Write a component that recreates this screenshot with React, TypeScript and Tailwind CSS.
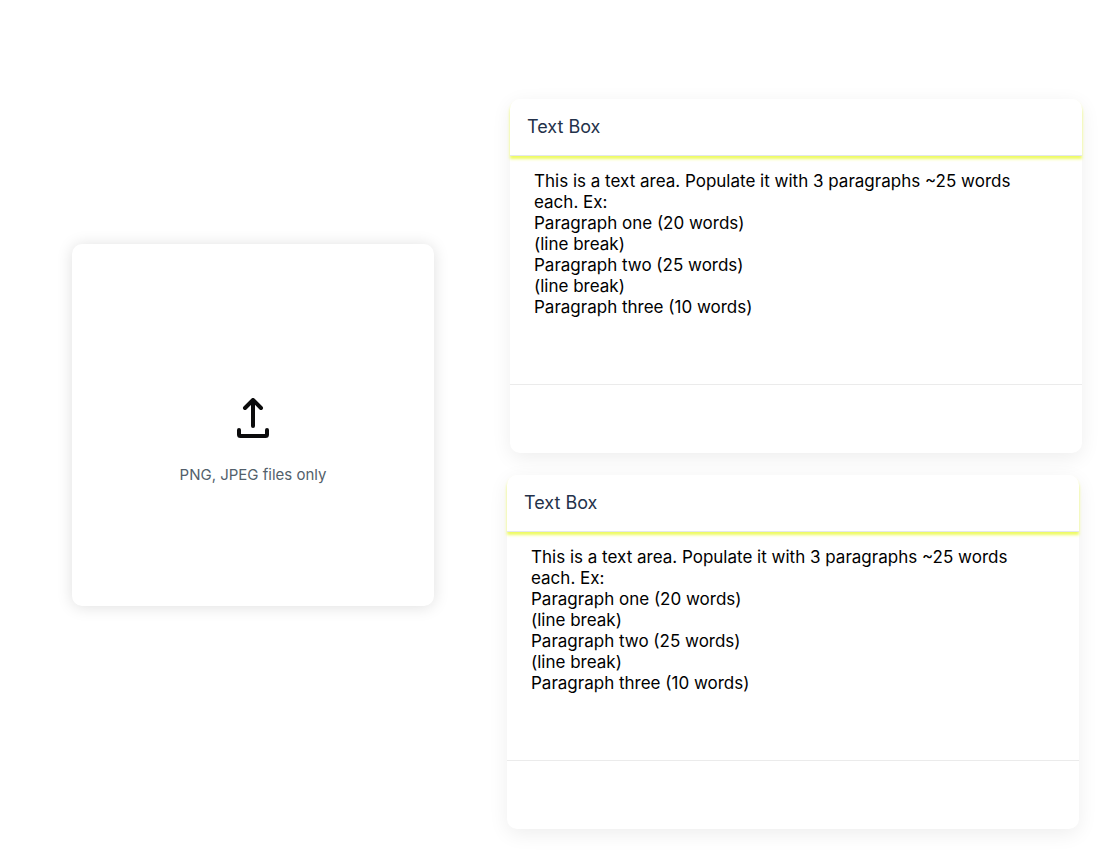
import { useId } from "react";

const SAMPLE_TEXT = [
  "This is a text area. Populate it with 3 paragraphs ~25 words each. Ex:",
  "Paragraph one (20 words)",
  "(line break)",
  "Paragraph two (25 words)",
  "(line break)",
  "Paragraph three (10 words)",
].join("\n");

function UploadIcon() {
  return (
    <svg
      width="40"
      height="40"
      viewBox="0 0 40 40"
      fill="none"
      stroke="#0b0b0c"
      strokeWidth="4"
      strokeLinecap="round"
      strokeLinejoin="round"
      aria-hidden="true"
    >
      <path d="M20 28V3" />
      <path d="M12 10L20 2L28 10" />
      <path d="M6 32V36.5Q6 38 7.500 38H32.500Q34 38 34 36.500V32" />
    </svg>
  );
}

function UploadCard() {
  return (
    <label className="flex min-h-[362px] w-[362px] shrink-0 cursor-pointer flex-col items-center justify-center gap-[25px] self-center rounded-[10px] bg-white pt-[35px] shadow-[0_1px_16px_rgba(0,0,0,0.13)]">
      <input type="file" accept="image/png,image/jpeg" className="sr-only" />
      <UploadIcon />
      <span className="text-[15px] leading-6 text-[#535f6b]">PNG, JPEG files only</span>
    </label>
  );
}

function TextBoxCard({ className }: { className: string }) {
  const id = useId();
  return (
    <section className={`rounded-[10px] bg-white shadow-[0_5px_20px_rgba(0,0,0,0.07)] ${className}`}>
      <header className="relative flex h-[57px] items-center rounded-t-[10px] border-b border-[#e4e7ec] bg-white px-[17px] shadow-[0_3px_3px_#eefb62]">
        <label htmlFor={id} className="text-lg text-[#24324a]">
          Text Box
        </label>
      </header>
      <textarea
        id={id}
        defaultValue={SAMPLE_TEXT}
        className="block h-[228px] w-full resize-none px-6 pt-[15px] text-[17px] leading-[21px] text-black outline-none"
      />
      <footer className="h-[69px] border-t border-[#ebebeb]" />
    </section>
  );
}

export default function App() {
  return (
    <main className="flex min-h-screen gap-[73px] bg-white pr-9 pl-[72px] font-['Inter',sans-serif]">
      <UploadCard />
      <div className="flex min-w-0 flex-1 flex-col gap-[22px] pt-[99px] pb-5">
        <TextBoxCard className="ml-[3px]" />
        <TextBoxCard className="mr-[3px]" />
      </div>
    </main>
  );
}
